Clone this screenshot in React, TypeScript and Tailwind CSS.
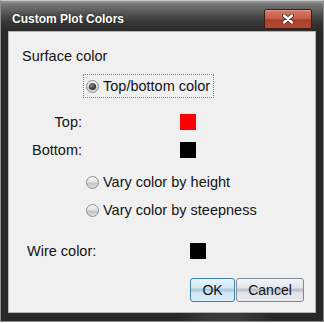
import type { ReactNode } from 'react';

function Radio({ checked }: { checked?: boolean }) {
  return (
    <span className="w-[13px] h-[13px] rounded-full border border-[#8e8f8f] bg-[linear-gradient(to_bottom,#f6f6f6_0%,#e4e4e4_45%,#c4c4c4_55%,#dcdcdc_100%)] flex items-center justify-center shrink-0">
      {checked && (
        <span className="w-[7px] h-[7px] rounded-full bg-[radial-gradient(circle_at_40%_35%,#8a8a8a_0%,#3a3a3a_60%,#1e1e1e_100%)]" />
      )}
    </span>
  );
}

function Swatch({ color, className = '' }: { color: string; className?: string }) {
  return <div className={'w-[16px] h-[16px] shrink-0 ' + className} style={{ background: color }} />;
}

function Btn({ children, primary, width }: { children: ReactNode; primary?: boolean; width: string }) {
  return (
    <button
      className={
        'h-[24px] rounded-[3px] border text-[14px] leading-[22px] text-[#111] ' +
        width +
        (primary
          ? ' border-[#3c7fb1] bg-[linear-gradient(to_bottom,#e8f5fc_0%,#d3eaf7_38%,#a6c6dc_50%,#cfe6f4_62%,#d9eefa_100%)]'
          : ' border-[#7f8a98] bg-[linear-gradient(to_bottom,#f3f4f7_0%,#e3e6ec_38%,#b9bcc2_50%,#dfe2e8_62%,#e9ebef_100%)]')
      }
    >
      {children}
    </button>
  );
}

export default function App() {
  return (
    <div className="w-[324px] h-[323px] bg-white font-['Liberation_Sans',Arial,sans-serif]">
      <div className="w-[324px] h-[322px] border border-[#8d8d8d] border-t-[#c6c6c6] bg-[#282828] flex flex-col">
        {/* Title bar */}
        <div className="h-[30px] shrink-0 flex items-start justify-between pl-[11px] pr-[11px] bg-[linear-gradient(to_bottom,#9a9a9a_0%,#767676_12%,#525252_42%,#363636_72%,#2a2a2a_100%)]">
          <span className="mt-[11px] text-white font-bold text-[12px] leading-[15px] [text-shadow:0_0_2px_rgba(0,0,0,0.6)]">
            Custom Plot Colors
          </span>
          <div className="mt-[8px] w-[48px] h-[20px] rounded-[2px] border border-[#3a1c14] bg-[linear-gradient(to_bottom,#d97a66_0%,#c5604b_45%,#a8402d_55%,#b24a36_100%)] flex items-center justify-center shadow-[inset_0_1px_0_rgba(255,255,255,0.25)]">
            <svg width="12" height="10" viewBox="0 0 12 10">
              <path d="M2 1.5 L10 8.5 M10 1.5 L2 8.5" stroke="#4a2a26" strokeWidth="4.2" strokeLinecap="round" />
              <path d="M2 1.5 L10 8.5 M10 1.5 L2 8.5" stroke="#ffffff" strokeWidth="2.4" strokeLinecap="round" />
            </svg>
          </div>
        </div>

        {/* Content */}
        <div className="mx-[7px] h-[282px] shrink-0 bg-[#f0f0f0] border border-[#b4b4b4] flex flex-col text-[14.5px] text-[#141414]">
          <div className="mt-[16px] h-[16px] leading-[16px] pl-[13px]">Surface color</div>

          <div className="mt-[10px] ml-[74px] h-[24px] w-[131px] border border-dotted border-[#3b9ad0] flex items-center pl-[2px] gap-[4px]">
            <Radio checked />
            <span className="leading-[16px] whitespace-nowrap">Top/bottom color</span>
          </div>

          <div className="mt-[16px] h-[16px] flex items-center">
            <span className="w-[73px] text-right leading-[16px]">Top:</span>
            <Swatch color="#ff0000" className="ml-[98px]" />
          </div>
          <div className="mt-[12px] h-[16px] flex items-center">
            <span className="w-[73px] text-right leading-[16px]">Bottom:</span>
            <Swatch color="#000000" className="ml-[98px]" />
          </div>

          <div className="mt-[16px] h-[16px] ml-[77px] flex items-center gap-[4px]">
            <Radio />
            <span className="leading-[16px] whitespace-nowrap">Vary color by height</span>
          </div>
          <div className="mt-[12px] h-[16px] ml-[77px] flex items-center gap-[4px]">
            <Radio />
            <span className="leading-[16px] whitespace-nowrap">Vary color by steepness</span>
          </div>

          <div className="mt-[25px] h-[16px] pl-[18px] flex items-center">
            <span className="w-[163px] leading-[16px]">Wire color:</span>
            <Swatch color="#000000" />
          </div>

          <div className="mt-[19px] flex justify-end pr-[11px] gap-[1px]">
            <Btn primary width="w-[45px]">OK</Btn>
            <Btn width="w-[68px]">Cancel</Btn>
          </div>
        </div>

        {/* Bottom frame */}
        <div className="flex-1 bg-[linear-gradient(to_right,#282828_0%,#282828_55%,#3a3a3a_65%,#3a3a3a_75%,#282828_85%,#282828_100%)]" />
      </div>
    </div>
  );
}
